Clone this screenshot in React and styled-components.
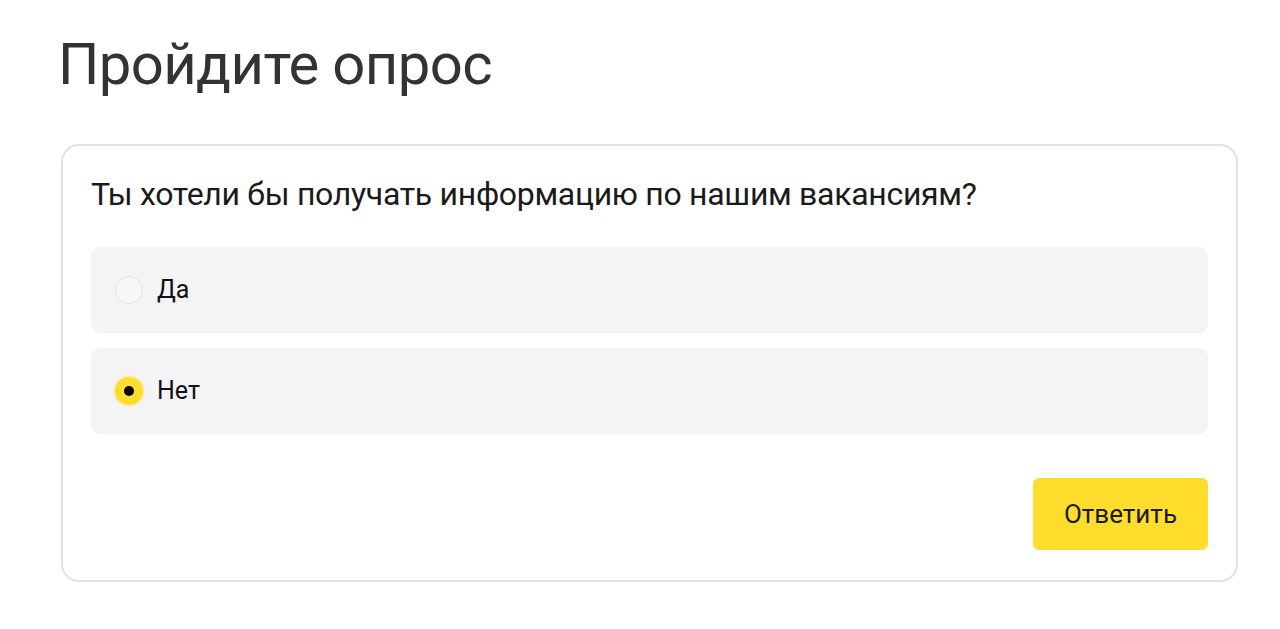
import React, { useState } from 'react';
import styled, { createGlobalStyle } from 'styled-components';

const GlobalStyle = createGlobalStyle`
    body {
        margin: 0;
        background: #ffffff;
        font-family: Roboto, 'Noto Sans', sans-serif;
        color: #333333;
    }
`;

export default function App() {
    const [answer, setAnswer] = useState('no');

    return (
        <Page>
            <GlobalStyle />
            <Title>Пройдите опрос</Title>
            <Card>
                <Question>Ты хотели бы получать информацию по нашим вакансиям?</Question>
                <Options>
                    <Option onClick={() => setAnswer('yes')}>
                        <Radio checked={answer === 'yes'} />
                        <Label>Да</Label>
                    </Option>
                    <Option onClick={() => setAnswer('no')}>
                        <Radio checked={answer === 'no'} />
                        <Label>Нет</Label>
                    </Option>
                </Options>
                <Footer>
                    <Button>Ответить</Button>
                </Footer>
            </Card>
        </Page>
    );
}

const Page = styled.div`
    padding: 24px 42px 0 61px;
`;

const Title = styled.h1`
    margin: 0 0 40px -3px;
    font-size: 58px;
    font-weight: 400;
    line-height: 80px;
    letter-spacing: -0.6px;
    color: #333333;
`;

const Card = styled.div`
    box-sizing: border-box;
    width: 1177px;
    padding: 28px 28px 30px 28px;
    border: 2px solid #e2e2e4;
    border-radius: 18px;
    background: #ffffff;
`;

const Question = styled.h2`
    margin: 0 0 33px 0;
    font-size: 32px;
    font-weight: 400;
    line-height: 40px;
    letter-spacing: -0.3px;
    color: #1a1a1a;
`;

const Options = styled.div`
    display: flex;
    flex-direction: column;
    gap: 15px;
`;

const Option = styled.label`
    display: flex;
    align-items: center;
    gap: 14px;
    height: 86px;
    padding: 0 24px;
    border-radius: 9px;
    background: #f4f4f6;
    cursor: pointer;
`;

const Radio = styled.span`
    box-sizing: border-box;
    position: relative;
    width: 28px;
    height: 28px;
    border-radius: 50%;
    flex-shrink: 0;
    background: ${(props) => (props.checked ? '#ffdd2d' : '#f7f7f8')};
    border: ${(props) => (props.checked ? 'none' : '1.5px solid #e4e4e6')};
    box-shadow: ${(props) => (props.checked ? '0 0 2px 1px rgba(255, 221, 45, 0.5)' : 'none')};

    &::after {
        content: '';
        display: ${(props) => (props.checked ? 'block' : 'none')};
        position: absolute;
        top: 50%;
        left: 50%;
        width: 10px;
        height: 10px;
        margin: -5px 0 0 -5px;
        border-radius: 50%;
        background: #000000;
    }
`;

const Label = styled.span`
    font-size: 25px;
    line-height: 30px;
    color: #111111;
`;

const Footer = styled.div`
    display: flex;
    justify-content: flex-end;
    margin-top: 44px;
`;

const Button = styled.button`
    height: 72px;
    padding: 0 31px;
    border: none;
    border-radius: 6px;
    background: #ffdd2d;
    font-family: Roboto, 'Noto Sans', sans-serif;
    font-size: 26px;
    color: #1a1a1a;
    cursor: pointer;
`;
